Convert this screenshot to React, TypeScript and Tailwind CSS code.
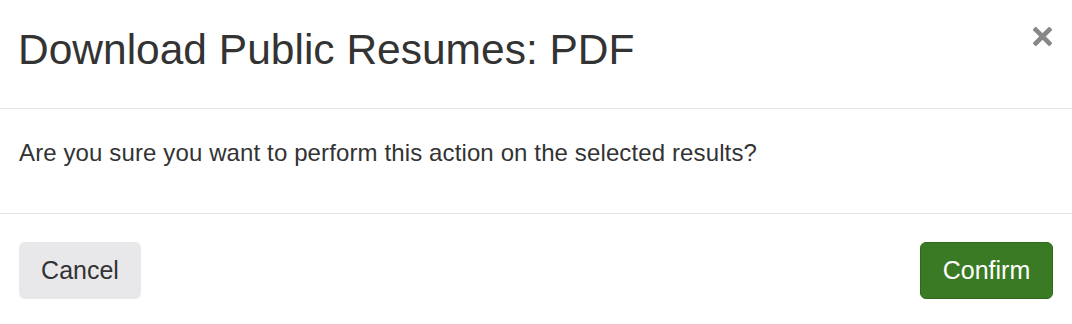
export default function App() {
  return (
    <div className="w-[1072px] h-[324px] bg-white text-[#333] font-['Liberation_Sans',Arial,sans-serif] flex flex-col">
      <div className="h-[109px] border-b border-[#e5e5e5] flex items-start justify-between pl-[18px] pr-[20px]">
        <h4 className="text-[42.5px] leading-[48px] mt-[26px] font-normal">
          Download Public Resumes: PDF
        </h4>
        <button className="mt-[27px] w-[19px] h-[19px] text-[#888]" aria-label="Close">
          <svg viewBox="0 0 20 20" className="w-[19px] h-[19px]">
            <path d="M3 3 L17 17 M17 3 L3 17" stroke="currentColor" strokeWidth="5" strokeLinecap="square" />
          </svg>
        </button>
      </div>
      <div className="h-[105px] border-b border-[#e5e5e5] px-[19px] pt-[30px]">
        <p className="text-[24px] leading-[28px] tracking-[0.12px]">
          Are you sure you want to perform this action on the selected results?
        </p>
      </div>
      <div className="flex justify-between px-[19px] pt-[28px]">
        <button className="w-[122px] h-[57px] rounded-[6px] bg-[#e8e8ea] text-[25px] text-[#333]">
          Cancel
        </button>
        <button className="w-[133px] h-[57px] rounded-[6px] bg-[#3b7a24] border border-[#2f6a1b] text-[25px] text-white">
          Confirm
        </button>
      </div>
    </div>
  );
}
